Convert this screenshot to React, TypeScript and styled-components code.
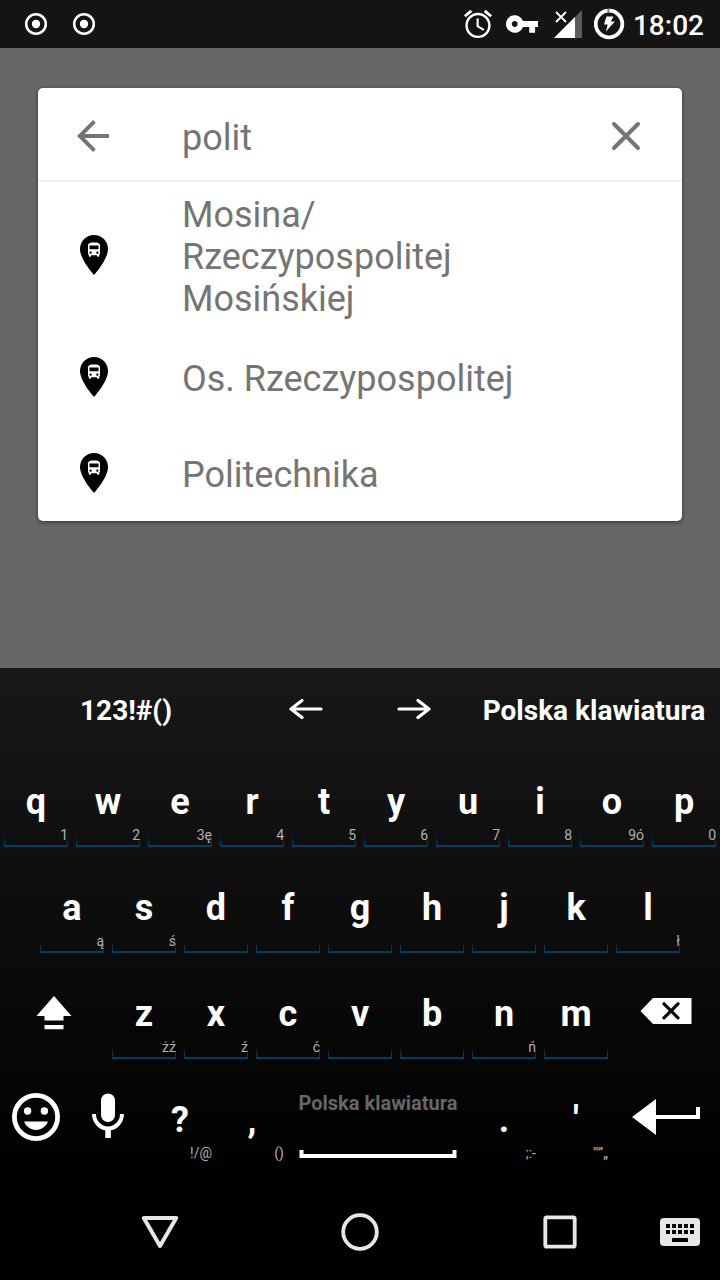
import React, { Fragment, useState } from "react";
import styled, { createGlobalStyle } from "styled-components";
import { X } from "lucide-react";

const GlobalStyle = createGlobalStyle`
  *, *::before, *::after { box-sizing: border-box; }
  body {
    margin: 0;
    background: #000;
    font-family: Roboto, "Noto Sans", sans-serif;
  }
  button, input { font-family: inherit; }
  button {
    border: 0;
    padding: 0;
    background: none;
    color: inherit;
    cursor: pointer;
  }
  svg { display: block; }
`;

const Screen = styled.div`
  display: flex;
  flex-direction: column;
  min-height: 100vh;
`;

/* ---------- status bar ---------- */

const StatusBar = styled.header`
  display: flex;
  justify-content: space-between;
  align-items: center;
  height: 48px;
  padding: 0 16px 0 24px;
  background: #141414;
  color: #fff;
`;

const StatusGroup = styled.div<{ $gap: number }>`
  display: flex;
  align-items: center;
  gap: ${(p) => p.$gap}px;
`;

const Clock = styled.time`
  font-size: 28px;
  line-height: 32px;
  font-weight: 500;
  padding-top: 4px;
`;

/* ---------- search card ---------- */

const Stage = styled.main`
  flex: 1;
  padding: 40px 38px;
  background: #676767;
`;

const Card = styled.section`
  border-radius: 5px;
  background: #fff;
  color: #757575;
  box-shadow: 0 1px 4px rgba(0, 0, 0, 0.5);
`;

const SearchBar = styled.form`
  display: flex;
  align-items: center;
  height: 94px;
  padding-top: 3px;
  border-bottom: 2px solid #eee;
`;

const IconCell = styled.span`
  display: flex;
  flex: none;
  justify-content: center;
  width: 112px;
`;

const SearchInput = styled.input`
  flex: 1;
  min-width: 0;
  margin: 0 0 0 32px;
  padding: 5px 0 0;
  border: 0;
  outline: 0;
  background: none;
  color: inherit;
  font-size: 36px;
  line-height: 42px;
`;

const Suggestions = styled.ul`
  margin: 0;
  padding: 0;
  list-style: none;
`;

const Suggestion = styled.button`
  display: flex;
  align-items: center;
  width: 100%;
  min-height: 96px;
  padding: 8px 140px 9px 0;
  text-align: left;
`;

const SuggestionText = styled.span`
  flex: 1;
  margin-left: 32px;
  padding-top: 4px;
  font-size: 36px;
  line-height: 42px;
`;

/* ---------- keyboard ---------- */

const Keyboard = styled.section`
  padding-bottom: 10px;
  background: linear-gradient(#181818, #000);
  color: #fff;
`;

const Toolbar = styled.div`
  display: grid;
  grid-template-columns: 35fr 15fr 15fr 35fr;
  height: 82px;
`;

const ToolButton = styled.button`
  display: flex;
  align-items: center;
  justify-content: center;
`;

const ToolLabel = styled.span`
  padding-top: 4px;
  font-size: 28px;
  line-height: 32px;
  font-weight: 700;
  white-space: nowrap;
`;

/* Every row is cut into twentieths of the keyboard's width. */
const KeyRow = styled.div<{ $inset?: boolean }>`
  display: grid;
  grid-template-columns: repeat(${(p) => (p.$inset ? 18 : 20)}, minmax(0, 1fr));
  height: 106px;
  padding: 0 ${(p) => (p.$inset ? "5%" : "0")};
`;

const Key = styled.button`
  display: flex;
  grid-column: span 2;
  flex-direction: column;
  gap: 4px;
  padding: 31px 4px 9px;
`;

const KeyLabel = styled.span`
  width: 100%;
  font-size: 36px;
  line-height: 42px;
  font-weight: 700;
  text-align: center;
`;

const KeyHint = styled.span<{ $framed: boolean }>`
  width: 100%;
  height: 20px;
  border-bottom: 2px solid ${(p) => (p.$framed ? "#003e63" : "transparent")};
  background: ${(p) =>
    p.$framed
      ? `linear-gradient(#00263d, #003e63) left bottom / 1px 7px no-repeat,
         linear-gradient(#00263d, #003e63) right bottom / 1px 7px no-repeat`
      : "none"};
  color: #b0b0b0;
  font-size: 14px;
  line-height: 16px;
  text-align: right;
`;

const IconKey = styled.button<{ $span: number }>`
  display: flex;
  grid-column: span ${(p) => p.$span};
  align-items: center;
  justify-content: center;
  padding-bottom: 8px;
`;

const SpaceKey = styled.button`
  display: flex;
  grid-column: span 5;
  flex-direction: column;
  align-items: center;
  gap: 35px;
  padding: 23px 0 16px;
  color: #666;
  font-size: 20px;
  line-height: 24px;
  font-weight: 700;
  white-space: nowrap;
`;

/* ---------- navigation bar ---------- */

const NavBar = styled.nav`
  display: grid;
  grid-template-columns: 1fr 1fr 1fr 40px;
  height: 96px;
  padding: 0 20px 0 60px;
  background: #000;
  color: #e6e6e6;
`;

const NavButton = styled.button`
  display: flex;
  align-items: center;
  justify-content: center;
`;

/* ---------- drawings ---------- */

const RecordIcon = () => (
  <svg width="24" height="24" viewBox="0 0 24 24" aria-hidden="true">
    <circle cx="12" cy="12" r="9.8" fill="none" stroke="currentColor" strokeWidth="2.6" />
    <circle cx="12" cy="12" r="4.2" fill="currentColor" />
  </svg>
);

const AlarmIcon = () => (
  <svg width="32" height="32" viewBox="0.6 0.6 22.8 22.8" fill="currentColor" aria-hidden="true">
    <path d="M22 5.72l-4.6-3.86-1.29 1.53 4.6 3.86L22 5.72zM7.88 3.39L6.6 1.86 2 5.71l1.29 1.53 4.59-3.85zM12.5 8H11v6l4.75 2.85.75-1.23-4-2.37V8zM12 4c-4.97 0-9 4.03-9 9s4.02 9 9 9c4.97 0 9-4.03 9-9s-4.03-9-9-9zm0 16.3c-4 0-7.3-3.3-7.3-7.3S8 5.7 12 5.7s7.3 3.3 7.3 7.3-3.3 7.3-7.3 7.3z" />
  </svg>
);

const VpnKeyIcon = () => (
  <svg width="32" height="32" viewBox="1 1 22 22" fill="currentColor" aria-hidden="true">
    <path d="M12.65 10C11.83 7.67 9.61 6 7 6c-3.31 0-6 2.69-6 6s2.69 6 6 6c2.61 0 4.83-1.67 5.65-4H17v4h4v-4h2v-4H12.65zM7 14c-1.1 0-2-.9-2-2s.9-2 2-2 2 .9 2 2-.9 2-2 2z" />
  </svg>
);

const SignalIcon = () => (
  <svg width="32" height="32" viewBox="0 0 32 32" aria-hidden="true">
    <path d="M32 2v28H4z" fill="#5c5c5c" />
    <path d="M25 9v21H4z" fill="#fff" />
    <path d="M6 4l10 10M16 4L6 14" stroke="#fff" strokeWidth="1.8" />
  </svg>
);

const BatteryIcon = () => (
  <svg width="32" height="32" viewBox="0 0 32 32" aria-hidden="true">
    <circle cx="15" cy="16" r="13.3" fill="none" stroke="#fff" strokeWidth="3.8" />
    <path d="M13.4 0.8h2v4h-2z" fill="#777" />
    <path d="M12.5 8.5h7l-2.6 5h4l-9 10 1.8-7H10z" fill="#fff" />
  </svg>
);

const BackIcon = () => (
  <svg width="48" height="48" viewBox="0 0 24 24" fill="currentColor" aria-hidden="true">
    <path d="M19.500 11H7.330l5.590-5.590L11.500 4l-8 8 8 8 1.410-1.410L7.330 13H19.500v-2z" />
  </svg>
);

const StopPinIcon = () => (
  <svg width="48" height="48" viewBox="0 0 48 48" aria-hidden="true">
    <path
      transform="scale(2)"
      fill="#000"
      d="M12 2C8.13 2 5 5.13 5 9c0 5.25 7 13 7 13s7-7.75 7-13c0-3.87-3.13-7-7-7z"
    />
    <path
      transform="translate(15 10) scale(.75)"
      fill="#fff"
      d="M4 16c0 .88.39 1.67 1 2.22V20c0 .55.45 1 1 1h1c.55 0 1-.45 1-1v-1h8v1c0 .55.45 1 1 1h1c.55 0 1-.45 1-1v-1.78c.61-.55 1-1.34 1-2.22V6c0-3.5-3.58-4-8-4s-8 .5-8 4v10zm3.5 1c-.83 0-1.5-.67-1.5-1.5S6.67 14 7.5 14s1.5.67 1.5 1.5S8.33 17 7.5 17zm9 0c-.83 0-1.5-.67-1.5-1.5s.67-1.5 1.5-1.5 1.5.67 1.5 1.5-.67 1.5-1.5 1.5zm1.5-6H6V6h12v5z"
    />
  </svg>
);

const CursorIcon = ({ right = false }: { right?: boolean }) => (
  <svg
    width="34"
    height="24"
    viewBox="0 0 34 24"
    fill="none"
    stroke="currentColor"
    strokeWidth="3.2"
    strokeLinecap="round"
    strokeLinejoin="round"
    aria-hidden="true"
  >
    <path d={right ? "M2 12h30M21 3.500L32 12l-11 8.500" : "M32 12H2M13 3.500L2 12l11 8.500"} />
  </svg>
);

const ShiftIcon = () => (
  <svg width="36" height="37" viewBox="0 -3 36 37" fill="currentColor" aria-hidden="true">
    <path d="M18 0l17.500 20H27.500v4.500h-19V20H0.500zM8.500 29h19v4.300h-19z" />
  </svg>
);

const BackspaceIcon = () => (
  <svg width="52" height="26" viewBox="0 0 52 26" aria-hidden="true">
    <path d="M0.500 13L13 0H51.500v26H13z" fill="#fff" />
    <path d="M24 5.800l14 14M38 5.800l-14 14" stroke="#080808" strokeWidth="3.200" strokeLinecap="round" />
  </svg>
);

const SmileyIcon = () => (
  <svg width="48" height="48" viewBox="0 0 48 48" fill="currentColor" aria-hidden="true">
    <circle cx="24" cy="24" r="21.600" fill="none" stroke="currentColor" strokeWidth="4.800" />
    <circle cx="15.600" cy="18" r="3.700" />
    <circle cx="32.400" cy="18" r="3.700" />
    <path d="M12 28.600h24c-2 5-6.500 8.400-12 8.400s-10-3.400-12-8.400z" />
  </svg>
);

const MicIcon = () => (
  <svg width="34" height="48" viewBox="0 0 34 48" fill="currentColor" aria-hidden="true">
    <rect x="10" y="0.500" width="14" height="28.500" rx="7" />
    <path d="M3 21a14 14.500 0 0 0 28 0" fill="none" stroke="currentColor" strokeWidth="4" />
    <path d="M14.300 36h5.600v9h-5.600z" />
  </svg>
);

const SpaceIcon = () => (
  <svg width="158" height="8" viewBox="0 0 158 8" fill="#fff" aria-hidden="true">
    <path d="M0.500 0h4v4h149V0h4v8H0.500z" />
  </svg>
);

const EnterIcon = () => (
  <svg width="68" height="36" viewBox="0 0 68 36" fill="currentColor" aria-hidden="true">
    <path d="M0 18L24 0v16h40V8h4v12H24v16z" />
  </svg>
);

const TriangleIcon = () => (
  <svg width="38" height="34" viewBox="0 0 38 34" aria-hidden="true">
    <path d="M2.800 3h32.400L19 31z" fill="none" stroke="currentColor" strokeWidth="4" strokeLinejoin="round" />
  </svg>
);

const CircleIcon = () => (
  <svg width="38" height="38" viewBox="0 0 38 38" aria-hidden="true">
    <circle cx="19" cy="19" r="16.800" fill="none" stroke="currentColor" strokeWidth="3.800" />
  </svg>
);

const SquareIcon = () => (
  <svg width="34" height="34" viewBox="0 0 34 34" aria-hidden="true">
    <rect x="2.300" y="2.300" width="29.400" height="29.400" rx="1.500" fill="none" stroke="currentColor" strokeWidth="3.800" />
  </svg>
);

const KeyboardIcon = () => (
  <svg width="40" height="28" viewBox="0 0 40 28" aria-hidden="true">
    <rect width="40" height="28" rx="4" fill="currentColor" />
    {[6, 12, 18, 24, 30].map((x) => (
      <path key={x} d={`M${x} 6h4v4h-4zM${x} 12h4v4h-4z`} fill="#000" />
    ))}
    <path d="M12 20h16v4H12z" fill="#000" />
  </svg>
);

/* ---------- data ---------- */

type KeySpec = [label: string, hint?: string];

const topRow: KeySpec[] = [
  ["q", "1"], ["w", "2"], ["e", "3ę"], ["r", "4"], ["t", "5"],
  ["y", "6"], ["u", "7"], ["i", "8"], ["o", "9ó"], ["p", "0"],
];
const homeRow: KeySpec[] = [
  ["a", "ą"], ["s", "ś"], ["d"], ["f"], ["g"], ["h"], ["j"], ["k"], ["l", "ł"],
];
const lowerRow: KeySpec[] = [
  ["z", "żź"], ["x", "ź"], ["c", "ć"], ["v"], ["b"], ["n", "ń"], ["m"],
];
const stops = [
  "Mosina/Rzeczypospolitej Mosińskiej",
  "Os. Rzeczypospolitej",
  "Politechnika",
];

/* A stop name may wrap after the slash between town and street. */
const StopName = ({ name }: { name: string }) => (
  <>
    {name.split("/").map((part, i) => (
      <Fragment key={part}>
        {i > 0 && <>/<wbr /></>}
        {part}
      </Fragment>
    ))}
  </>
);

const Keys = ({ keys, framed = true }: { keys: KeySpec[]; framed?: boolean }) => (
  <>
    {keys.map(([label, hint]) => (
      <Key key={label} type="button">
        <KeyLabel>{label}</KeyLabel>
        <KeyHint $framed={framed}>{hint}</KeyHint>
      </Key>
    ))}
  </>
);

export default function App() {
  const [query, setQuery] = useState("polit");

  return (
    <Screen>
      <GlobalStyle />
      <StatusBar>
        <StatusGroup $gap={24}>
          <RecordIcon />
          <RecordIcon />
        </StatusGroup>
        <StatusGroup $gap={7}>
          <StatusGroup $gap={12}>
            <AlarmIcon />
            <VpnKeyIcon />
            <SignalIcon />
            <BatteryIcon />
          </StatusGroup>
          <Clock>18:02</Clock>
        </StatusGroup>
      </StatusBar>

      <Stage>
        <Card>
          <SearchBar onSubmit={(e) => e.preventDefault()}>
            <IconCell as="button" type="button" aria-label="Wstecz">
              <BackIcon />
            </IconCell>
            <SearchInput
              aria-label="Szukaj przystanku"
              value={query}
              onChange={(e) => setQuery(e.target.value)}
            />
            <IconCell as="button" type="button" aria-label="Wyczyść" onClick={() => setQuery("")}>
              <X size={48} strokeWidth={2} />
            </IconCell>
          </SearchBar>
          <Suggestions>
            {stops.map((stop) => (
              <li key={stop}>
                <Suggestion type="button" onClick={() => setQuery(stop)}>
                  <IconCell>
                    <StopPinIcon />
                  </IconCell>
                  <SuggestionText>
                    <StopName name={stop} />
                  </SuggestionText>
                </Suggestion>
              </li>
            ))}
          </Suggestions>
        </Card>
      </Stage>

      <Keyboard aria-label="Klawiatura">
        <Toolbar>
          <ToolButton type="button">
            <ToolLabel>123!#()</ToolLabel>
          </ToolButton>
          <ToolButton type="button" aria-label="Kursor w lewo">
            <CursorIcon />
          </ToolButton>
          <ToolButton type="button" aria-label="Kursor w prawo">
            <CursorIcon right />
          </ToolButton>
          <ToolButton type="button">
            <ToolLabel>Polska klawiatura</ToolLabel>
          </ToolButton>
        </Toolbar>
        <KeyRow>
          <Keys keys={topRow} />
        </KeyRow>
        <KeyRow $inset>
          <Keys keys={homeRow} />
        </KeyRow>
        <KeyRow>
          <IconKey $span={3} type="button" aria-label="Shift">
            <ShiftIcon />
          </IconKey>
          <Keys keys={lowerRow} />
          <IconKey $span={3} type="button" aria-label="Usuń">
            <BackspaceIcon />
          </IconKey>
        </KeyRow>
        <KeyRow>
          <IconKey $span={2} type="button" aria-label="Emoji">
            <SmileyIcon />
          </IconKey>
          <IconKey $span={2} type="button" aria-label="Mikrofon">
            <MicIcon />
          </IconKey>
          <Keys framed={false} keys={[["?", "!/@"], [",", "()"]]} />
          <SpaceKey type="button">
            Polska klawiatura
            <SpaceIcon />
          </SpaceKey>
          <Keys framed={false} keys={[[".", ";:-"], ["'", "\"'”„"]]} />
          <IconKey $span={3} type="button" aria-label="Enter">
            <EnterIcon />
          </IconKey>
        </KeyRow>
      </Keyboard>

      <NavBar>
        <NavButton type="button" aria-label="Wstecz">
          <TriangleIcon />
        </NavButton>
        <NavButton type="button" aria-label="Ekran główny">
          <CircleIcon />
        </NavButton>
        <NavButton type="button" aria-label="Ostatnie aplikacje">
          <SquareIcon />
        </NavButton>
        <NavButton type="button" aria-label="Zmień klawiaturę">
          <KeyboardIcon />
        </NavButton>
      </NavBar>
    </Screen>
  );
}
